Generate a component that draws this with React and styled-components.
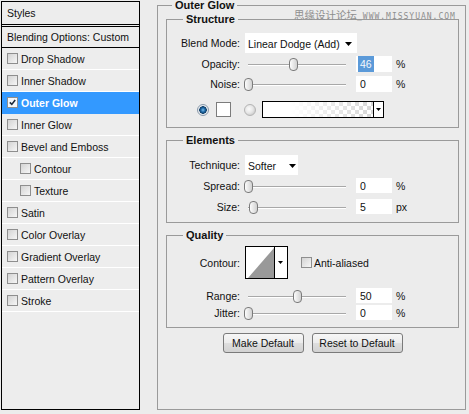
import React from "react";
import styled, { createGlobalStyle } from "styled-components";

const GlobalStyle = createGlobalStyle`
  html, body {
    margin: 0;
    padding: 0;
    background: #ececec;
  }
  body {
    font-family: "Liberation Sans", Arial, sans-serif;
    font-size: 10.5px;
    color: #111;
  }
`;

const styleItems = [
  { name: "Drop Shadow" },
  { name: "Inner Shadow" },
  { name: "Outer Glow", active: true },
  { name: "Inner Glow" },
  { name: "Bevel and Emboss" },
  { name: "Contour", indent: true },
  { name: "Texture", indent: true },
  { name: "Satin" },
  { name: "Color Overlay" },
  { name: "Gradient Overlay" },
  { name: "Pattern Overlay" },
  { name: "Stroke" },
];

const Caret = ({ w = 7, h = 4 }) => (
  <svg width={w} height={h} viewBox={`0 0 ${w} ${h}`}>
    <path d={`M0 0H${w}L${w / 2} ${h}Z`} fill="#000" />
  </svg>
);

const Checkbox = ({ checked }) => (
  <Box $checked={checked}>
    {checked && (
      <svg width="7" height="7" viewBox="0 0 7 7">
        <path d="M0.8 3.4L2.8 5.4L6.2 1" fill="none" stroke="#1d2a3a" strokeWidth="1.6" />
      </svg>
    )}
  </Box>
);

const Slider = ({ value }) => (
  <SliderTrack>
    <Thumb width="9" height="13" viewBox="0 0 9 13" style={{ left: 3 + value * 98 - 4.5 }}>
      <defs>
        <linearGradient id="thumbFill" x1="0" y1="0" x2="1" y2="0">
          <stop offset="0" stopColor="#ffffff" />
          <stop offset="1" stopColor="#cfcfcf" />
        </linearGradient>
      </defs>
      <rect x="0.5" y="0.5" width="8" height="12" rx="3.5" fill="url(#thumbFill)" stroke="#7b7b7b" />
    </Thumb>
  </SliderTrack>
);

const SliderRow = ({ label, value, text, unit, h, mt, selected }) => (
  <Row $h={h} $mt={mt}>
    <Label>{label}</Label>
    <Slider value={value} />
    <NumberField>
      <Value $selected={selected}>{text}</Value>
    </NumberField>
    <Unit>{unit}</Unit>
  </Row>
);

const App = () => {
  return (
    <Dialog>
      <GlobalStyle />
      <StyleList>
        <ListHeader>Styles</ListHeader>
        <BlendingRow>Blending Options: Custom</BlendingRow>
        {styleItems.map((item) => (
          <ListItem key={item.name} $active={item.active} $indent={item.indent}>
            <Checkbox checked={item.active} />
            <ItemText>{item.name}</ItemText>
          </ListItem>
        ))}
      </StyleList>

      <OuterFrame>
        <OuterTitle>Outer Glow</OuterTitle>

        <Frame $pb={9}>
          <FrameTitle>Structure</FrameTitle>
          <Row $h={20} $mt={8}>
            <Label>Blend Mode:</Label>
            <Select $w={112} $pr={5}>
              <span>Linear Dodge (Add)</span>
              <Caret />
            </Select>
          </Row>
          <SliderRow label="Opacity:" value={0.46} text="46" unit="%" h={16} mt={3} selected />
          <SliderRow label="Noise:" value={0} text="0" unit="%" h={16} mt={4} />
          <Row $h={17} $mt={9}>
            <Radio $checked $ml={30} />
            <Swatch />
            <Radio $ml={13} />
            <GradientBox>
              <GradientFill />
              <PickerArrow>
                <Caret w={5} h={3} />
              </PickerArrow>
            </GradientBox>
          </Row>
        </Frame>

        <Frame $mt={6} $pb={8}>
          <FrameTitle>Elements</FrameTitle>
          <Row $h={20} $mt={9}>
            <Label>Technique:</Label>
            <Select $w={53} $pr={2}>
              <span>Softer</span>
              <Caret />
            </Select>
          </Row>
          <SliderRow label="Spread:" value={0} text="0" unit="%" h={15} mt={3} />
          <SliderRow label="Size:" value={0.06} text="5" unit="px" h={15} mt={6} />
        </Frame>

        <Frame $mt={6} $pb={7}>
          <FrameTitle>Quality</FrameTitle>
          <Row $h={33} $mt={5}>
            <Label>Contour:</Label>
            <ContourBox>
              <svg width="28" height="31" viewBox="0 0 28 31">
                <polygon points="2,31 28,1 28,31" fill="#999999" />
              </svg>
              <ContourArrow>
                <Caret w={5} h={3} />
              </ContourArrow>
            </ContourBox>
            <CheckLabel>
              <Checkbox />
              <span>Anti-aliased</span>
            </CheckLabel>
          </Row>
          <SliderRow label="Range:" value={0.5} text="50" unit="%" h={15} mt={9} />
          <SliderRow label="Jitter:" value={0} text="0" unit="%" h={15} mt={2} />
        </Frame>

        <ButtonRow>
          <Button $w={81}>Make Default</Button>
          <Button $w={91}>Reset to Default</Button>
        </ButtonRow>
      </OuterFrame>

      <Watermark>
        <WmCn>思缘设计论坛</WmCn>
        <WmUrl>_WWW.MISSYUAN.COM</WmUrl>
      </Watermark>
    </Dialog>
  );
};

export default App;

const Dialog = styled.div`
  position: relative;
  display: flex;
  align-items: flex-start;
  width: 469px;
  height: 414px;
  padding: 1px 0 0 1px;
  box-sizing: border-box;
  overflow: hidden;
  background: #ececec;
`;

/* left list */

const StyleList = styled.div`
  width: 139px;
  height: 409px;
  flex: none;
  box-sizing: border-box;
  border: 1px solid #000;
  background: #ededed;
  display: flex;
  flex-direction: column;
`;

const ListHeader = styled.div`
  height: 22px;
  display: flex;
  align-items: center;
  padding-left: 5px;
  border-bottom: 3px double #000;
`;

const BlendingRow = styled.div`
  height: 20px;
  display: flex;
  align-items: center;
  padding-left: 5px;
  border-bottom: 1px solid #000;
`;

const ListItem = styled.div`
  height: 21px;
  flex: none;
  display: flex;
  align-items: center;
  padding-left: ${(p) => (p.$indent ? 18 : 5)}px;
  border-bottom: 1px solid ${(p) => (p.$active ? "#3399ff" : "#ffffff")};
  background: ${(p) => (p.$active ? "#3399ff" : "transparent")};
  color: ${(p) => (p.$active ? "#fff" : "#111")};
  font-weight: ${(p) => (p.$active ? "bold" : "normal")};
`;

const ItemText = styled.span`
  margin-left: 3px;
`;

const Box = styled.span`
  width: 11px;
  height: 11px;
  flex: none;
  box-sizing: border-box;
  border: 1px solid #8e8e8e;
  background: ${(p) =>
    p.$checked ? "#f4f7fa" : "linear-gradient(135deg, #d3d3d3, #f6f6f6)"};
  display: flex;
  align-items: center;
  justify-content: center;
`;

/* right side */

const OuterFrame = styled.fieldset`
  width: 309px;
  height: 410px;
  flex: none;
  box-sizing: border-box;
  margin: -1px 0 0 17px;
  padding: 2px 6px 0 8px;
  border: 1px solid #9a9a9a;
  min-width: 0;
`;

const OuterTitle = styled.legend`
  margin-left: 6px;
  padding: 0 3px;
  font-size: 11px;
  font-weight: bold;
  line-height: 11px;
  color: #111;
`;

const Frame = styled.fieldset`
  margin: ${(p) => p.$mt || 0}px 0 0;
  padding: 0 0 ${(p) => p.$pb}px 0;
  border: 1px solid #9a9a9a;
  min-width: 0;
`;

const FrameTitle = styled.legend`
  margin-left: 16px;
  padding: 0 3px;
  font-size: 11px;
  font-weight: bold;
  line-height: 12px;
  color: #111;
`;

const Row = styled.div`
  display: flex;
  align-items: center;
  height: ${(p) => p.$h}px;
  margin-top: ${(p) => p.$mt}px;
`;

const Label = styled.span`
  width: 73px;
  margin-right: 5px;
  flex: none;
  text-align: right;
`;

const Select = styled.div`
  width: ${(p) => p.$w}px;
  height: 20px;
  flex: none;
  box-sizing: border-box;
  background: #fff;
  display: flex;
  align-items: center;
  justify-content: space-between;
  padding: 1px ${(p) => p.$pr}px 0 3px;
`;

const SliderTrack = styled.div`
  position: relative;
  width: 104px;
  height: 100%;
  flex: none;

  &::before {
    content: "";
    position: absolute;
    left: 3px;
    right: 3px;
    top: 50%;
    height: 1px;
    background: #a8a8a8;
    box-shadow: 0 1px 0 #ffffff;
  }
`;

const Thumb = styled.svg`
  position: absolute;
  top: 50%;
  margin-top: -6px;
`;

const NumberField = styled.div`
  width: 36px;
  height: 100%;
  flex: none;
  box-sizing: border-box;
  margin-left: 7px;
  padding-left: 2px;
  background: #fff;
  display: flex;
  align-items: stretch;
`;

const Value = styled.span`
  display: flex;
  align-items: center;
  padding: 0 2px;
  background: ${(p) => (p.$selected ? "#5b9ad9" : "transparent")};
  color: ${(p) => (p.$selected ? "#f4f8fc" : "#111")};
`;

const Unit = styled.span`
  margin-left: 4px;
`;

const Radio = styled.span`
  width: 12px;
  height: 12px;
  flex: none;
  box-sizing: border-box;
  margin-left: ${(p) => p.$ml}px;
  border-radius: 50%;
  border: 1px solid ${(p) => (p.$checked ? "#8a9aab" : "#b4b4b4")};
  background: ${(p) =>
    p.$checked
      ? "radial-gradient(circle at 50% 50%, #7fc0ea 0, #1f6aa8 2px, #0e3d66 3.5px, #dfe4ea 4px, #f7f7f7 6px)"
      : "radial-gradient(circle at 40% 40%, #fbfbfb 0, #e6e6e6 4px, #d2d2d2 6px)"};
`;

const Swatch = styled.span`
  width: 15px;
  height: 15px;
  flex: none;
  box-sizing: border-box;
  margin-left: 7px;
  border: 1px solid #7c7c7c;
  background: #fff;
`;

const GradientBox = styled.div`
  width: 122px;
  height: 17px;
  flex: none;
  box-sizing: border-box;
  margin-left: 6px;
  border: 1px solid #000;
  display: flex;
`;

const GradientFill = styled.div`
  flex: 1;
  background:
    linear-gradient(to right, #fff 25%, rgba(255, 255, 255, 0) 100%),
    repeating-conic-gradient(#d6d6d6 0 25%, #ffffff 0 50%) 0 0 / 8px 8px;
`;

const PickerArrow = styled.div`
  width: 9px;
  flex: none;
  border-left: 1px solid #000;
  background: #fff;
  display: flex;
  align-items: center;
  justify-content: center;
`;

const ContourBox = styled.div`
  width: 43px;
  height: 33px;
  flex: none;
  box-sizing: border-box;
  border: 1px solid #000;
  background: #fff;
  display: flex;
  align-items: flex-end;
`;

const ContourArrow = styled.div`
  width: 12px;
  height: 100%;
  box-sizing: border-box;
  border-left: 1px solid #000;
  display: flex;
  align-items: center;
  justify-content: center;
`;

const CheckLabel = styled.label`
  display: flex;
  align-items: center;
  gap: 2px;
  margin-left: 13px;
`;

const ButtonRow = styled.div`
  display: flex;
  justify-content: center;
  gap: 8px;
  margin-top: 5px;
`;

const Button = styled.button`
  width: ${(p) => p.$w}px;
  height: 20px;
  padding: 0;
  border: 1px solid #7a7a7a;
  border-radius: 3px;
  background: linear-gradient(#f7f7f7, #ececec 48%, #dedede 52%, #d2d2d2);
  font-family: inherit;
  font-size: 10.5px;
  color: #111;
`;

const Watermark = styled.div`
  position: absolute;
  left: 294px;
  top: 8px;
  display: flex;
  align-items: baseline;
  white-space: nowrap;
  color: #8e8e8e;
`;

const WmCn = styled.span`
  font-family: "Noto Sans CJK SC", sans-serif;
  font-size: 10.5px;
  line-height: 14px;
`;

const WmUrl = styled.span`
  font-family: "DejaVu Sans Mono", monospace;
  font-size: 8px;
  letter-spacing: 1px;
`;
